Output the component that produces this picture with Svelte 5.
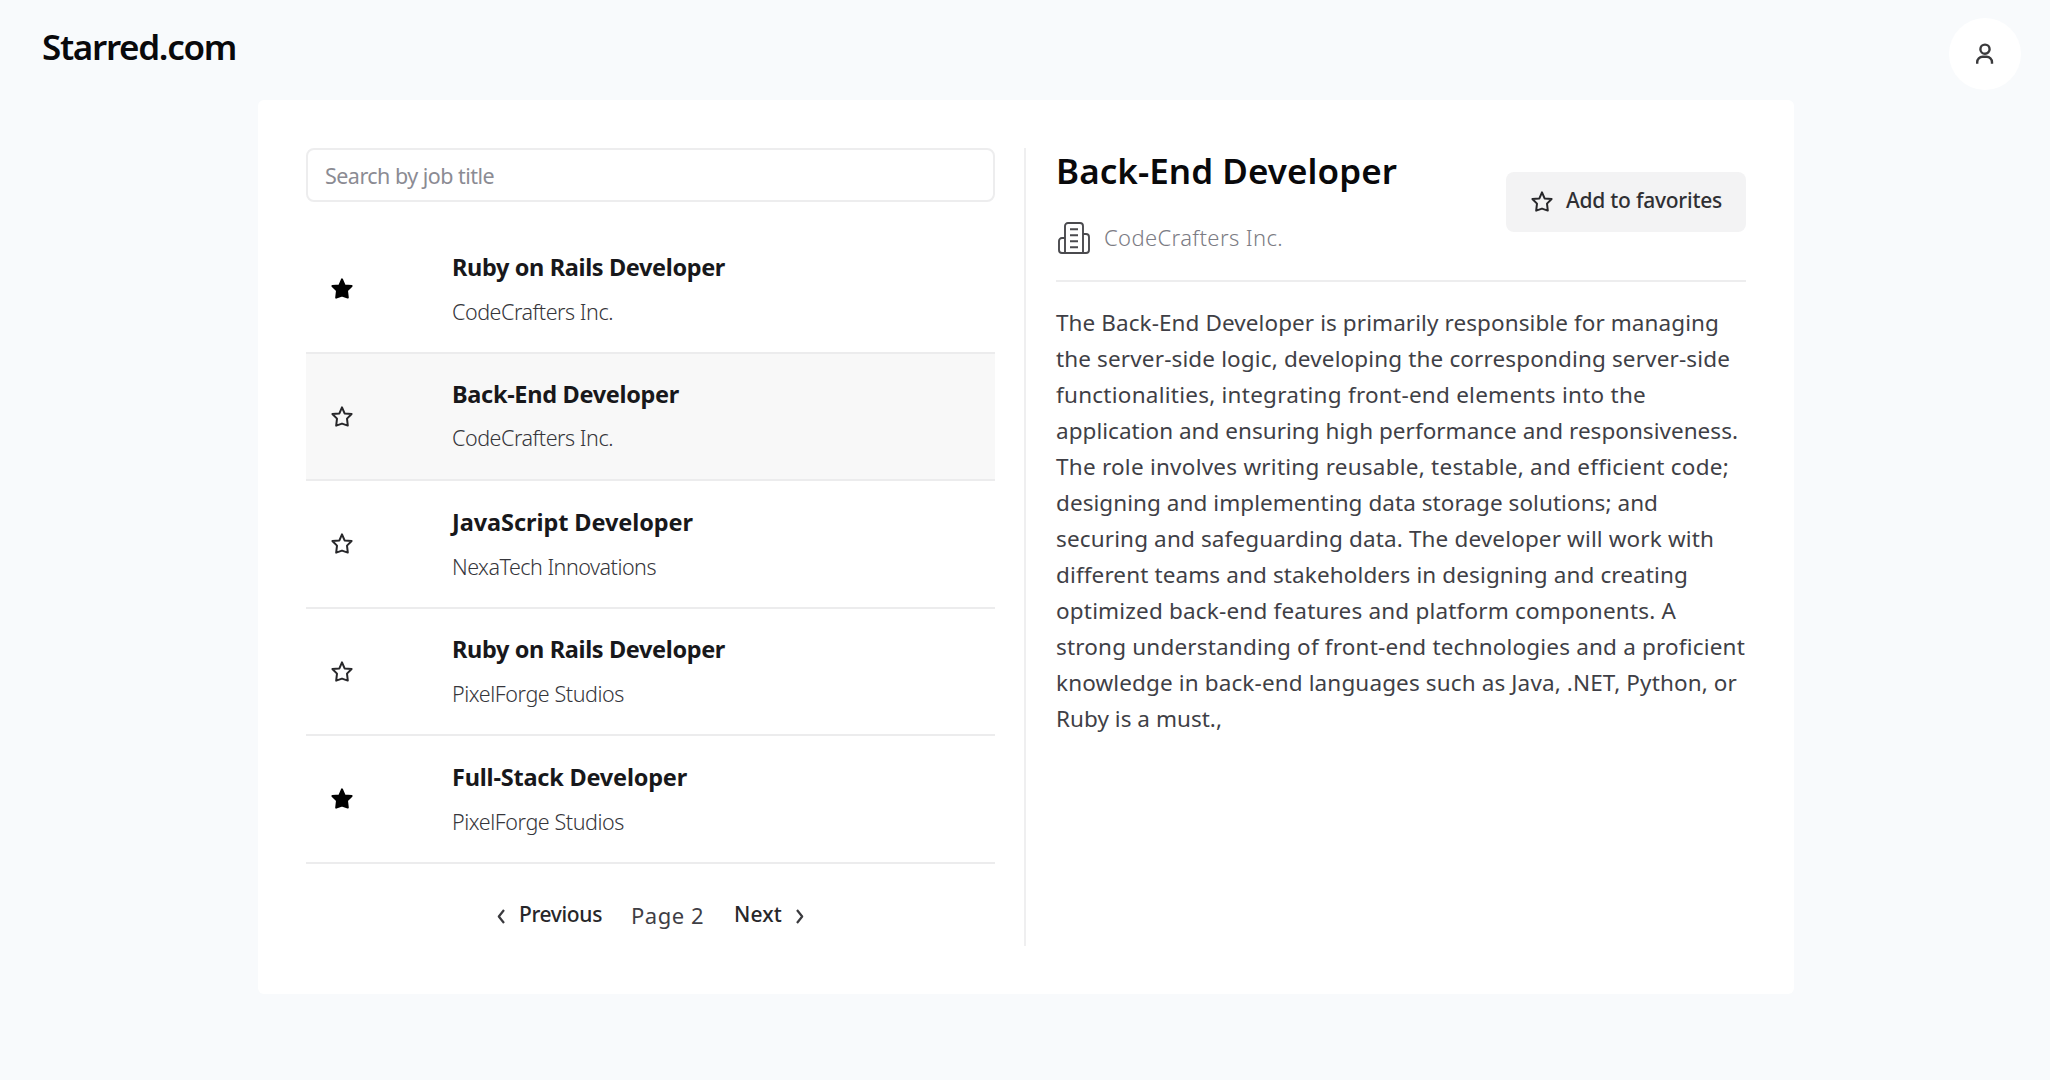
<script>
  const jobs = [
    { title: 'Ruby on Rails Developer', tw: 273, company: 'CodeCrafters Inc.', cw: 161, starred: true, low: true },
    { title: 'Back-End Developer', tw: 227, company: 'CodeCrafters Inc.', cw: 161, selected: true },
    { title: 'JavaScript Developer', tw: 241, company: 'NexaTech Innovations', cw: 204, low: true },
    { title: 'Ruby on Rails Developer', tw: 273, company: 'PixelForge Studios', cw: 172, low: true },
    { title: 'Full-Stack Developer', tw: 235, company: 'PixelForge Studios', cw: 172, starred: true, low: true },
  ];

  const description = [
    ['The Back-End Developer is primarily responsible for managing', 663],
    ['the server-side logic, developing the corresponding server-side', 674],
    ['functionalities, integrating front-end elements into the', 590],
    ['application and ensuring high performance and responsiveness.', 682],
    ['The role involves writing reusable, testable, and efficient code;', 673],
    ['designing and implementing data storage solutions; and', 602],
    ['securing and safeguarding data. The developer will work with', 658],
    ['different teams and stakeholders in designing and creating', 632],
    ['optimized back-end features and platform components. A', 620],
    ['strong understanding of front-end technologies and a proficient', 689],
    ['knowledge in back-end languages such as Java, .NET, Python, or', 681],
    ['Ruby is a must.,', 166],
  ];

  // Tracks a single line of text so that it spans the given width.
  function fit(node, width) {
    const natural = node.getBoundingClientRect().width;
    node.style.letterSpacing = `${(width - natural) / node.textContent.length}px`;
  }
</script>

{#snippet star(filled)}
  <svg class="star" viewBox="0 0 24 24" fill={filled ? '#000' : 'none'} stroke={filled ? '#000' : '#27272a'}>
    <path d="M12 2.3 L14.6 8.4 L21.6 9 L17 13.6 L17.8 20.6 L12 18.6 L6.2 20.6 L7 13.6 L2.4 9 L9.4 8.4 Z" />
  </svg>
{/snippet}

<div class="page">
  <header>
    <h1><span use:fit={194}>Starred.com</span></h1>
    <button class="avatar" aria-label="Account">
      <svg viewBox="0 0 24 24" width="24" height="24">
        <circle cx="12" cy="7.2" r="4.6" />
        <path d="M4.2 21.8v-1.6a5.4 5.4 0 0 1 5.4-5.4h4a5.4 5.4 0 0 1 5.4 5.4v1.6" />
      </svg>
    </button>
  </header>

  <main>
    <section class="list">
      <div class="search"><span use:fit={169}>Search by job title</span></div>
      <ul>
        {#each jobs as job}
          <li class:selected={job.selected} class:low={job.low}>
            <div class="mark">{@render star(job.starred)}</div>
            <div class="info">
              <h3><span use:fit={job.tw}>{job.title}</span></h3>
              <p><span use:fit={job.cw}>{job.company}</span></p>
            </div>
          </li>
        {/each}
      </ul>
      <nav>
        <button class="prev">
          <svg class="chev" viewBox="0 0 10 16"><path d="M8 2 L2.8 8.5 L8 15" /></svg>
          <span use:fit={83}>Previous</span>
        </button>
        <div class="current"><span use:fit={73}>Page 2</span></div>
        <button class="next">
          <span use:fit={48}>Next</span>
          <svg class="chev" viewBox="0 0 10 16"><path d="M2 2 L7.2 8.5 L2 15" /></svg>
        </button>
      </nav>
    </section>

    <section class="detail">
      <div class="top">
        <div>
          <h2><span use:fit={341}>Back-End Developer</span></h2>
          <div class="company">
            <svg viewBox="0 0 34 34" width="34" height="34">
              <path d="M8 32V5a3 3 0 0 1 3-3h12a3 3 0 0 1 3 3v27" />
              <path d="M8 17H5a3 3 0 0 0-3 3v9a3 3 0 0 0 3 3h24a3 3 0 0 0 3-3V16a3 3 0 0 0-3-3h-3" />
              <path d="M13 8.2h8M13 14.2h8M13 20.2h8M13 26.2h8" />
            </svg>
            <span use:fit={179}>CodeCrafters Inc.</span>
          </div>
        </div>
        <button class="favorite">
          {@render star(false)}
          <span use:fit={156}>Add to favorites</span>
        </button>
      </div>
      <div class="description">
        {#each description as [line, width]}
          <div><span use:fit={width}>{line}</span></div>
        {/each}
      </div>
    </section>
  </main>
</div>

<style>
  :global(body) {
    background: #f8fafc;
  }
  .page {
    min-height: 1080px;
    font-family: 'Noto Sans', 'Open Sans', sans-serif;
    color: #18181b;
  }
  .page * {
    box-sizing: border-box;
  }
  h1, h2, h3, p, ul {
    margin: 0;
    padding: 0;
  }
  span {
    display: inline-block;
    white-space: nowrap;
  }
  button {
    font: inherit;
    color: inherit;
    border: 0;
    padding: 0;
    background: none;
  }
  svg {
    display: block;
    flex: none;
    stroke-linejoin: round;
  }
  header {
    height: 100px;
    padding: 18px 29px 0 42px;
    display: flex;
    justify-content: space-between;
    align-items: flex-start;
  }
  h1, h2 {
    color: #09090b;
    font-size: 35px;
    font-weight: 600;
  }
  h1 {
    line-height: 57px;
  }
  .avatar {
    width: 72px;
    height: 72px;
    border-radius: 50%;
    background: #fff;
    display: flex;
    align-items: center;
    justify-content: center;
  }
  .avatar svg {
    fill: none;
    stroke: #3a3a3c;
    stroke-width: 2.4;
  }
  main {
    width: 1536px;
    height: 894px;
    margin-left: 258px;
    padding: 48px;
    border-radius: 6px;
    background: #fff;
    display: flex;
  }
  section.list {
    box-sizing: content-box;
    flex: none;
    width: 689px;
    height: 798px;
    padding-right: 29px;
    border-right: 2px solid #efeff0;
  }
  .search {
    height: 54px;
    border: 2px solid #ededee;
    border-radius: 8px;
    padding-left: 17px;
    font-size: 21.5px;
    line-height: 51px;
    color: #8b8b93;
  }
  ul {
    list-style: none;
    margin-top: 24px;
  }
  li {
    height: 127.5px;
    border-bottom: 2px solid #ececed;
    display: flex;
  }
  .selected {
    background: #f8f8f8;
  }
  .mark {
    width: 146px;
    padding: 51px 0 0 24px;
  }
  .star {
    width: 24px;
    height: 24px;
    stroke-width: 2;
  }
  h3 {
    margin-top: 23.5px;
    font-size: 23.5px;
    font-weight: 700;
    line-height: 35px;
  }
  .info p {
    margin-top: 8.5px;
    font-size: 21.5px;
    font-weight: 300;
    line-height: 34px;
    color: #36363b;
  }
  .low p {
    margin-top: 10px;
  }
  nav {
    display: flex;
    padding: 34px 0 0 190px;
    font-size: 21px;
    font-weight: 500;
    line-height: 34px;
    color: #27272a;
  }
  nav button, .favorite, .company {
    display: flex;
    align-items: center;
  }
  nav button {
    height: 33px;
  }
  .chev {
    width: 10px;
    height: 16px;
    margin-top: 4px;
    fill: none;
    stroke: #3a3a3e;
    stroke-width: 2.2;
  }
  .prev {
    gap: 13px;
  }
  .current {
    margin: 0 30px 0 29px;
    font-size: 22px;
    font-weight: 400;
    color: #3f3f46;
  }
  .next {
    gap: 13px;
  }
  .detail {
    padding-left: 30px;
    flex: 1;
  }
  .top {
    height: 134px;
    border-bottom: 2px solid #ededee;
    display: flex;
    justify-content: space-between;
  }
  h2 {
    line-height: 45px;
  }
  .company {
    margin-top: 27px;
    gap: 13px;
    font-size: 22px;
    font-weight: 300;
    line-height: 34px;
    color: #7c7c84;
  }
  .company span {
    padding-bottom: 1px;
  }
  .company svg {
    margin-left: 1px;
    fill: none;
    stroke: #4a4a4e;
    stroke-width: 1.9;
  }
  .favorite {
    width: 240px;
    height: 60px;
    margin-top: 24px;
    padding-left: 24px;
    gap: 12px;
    border-radius: 8px;
    background: #f3f3f4;
    font-size: 21px;
    font-weight: 500;
    line-height: 34px;
    color: #2f2f33;
  }
  .favorite span {
    padding-bottom: 4px;
  }
  .description {
    margin-top: 23px;
    font-size: 22.5px;
    line-height: 36px;
    color: #3f3f46;
  }
  .description div {
    height: 36px;
  }
</style>
